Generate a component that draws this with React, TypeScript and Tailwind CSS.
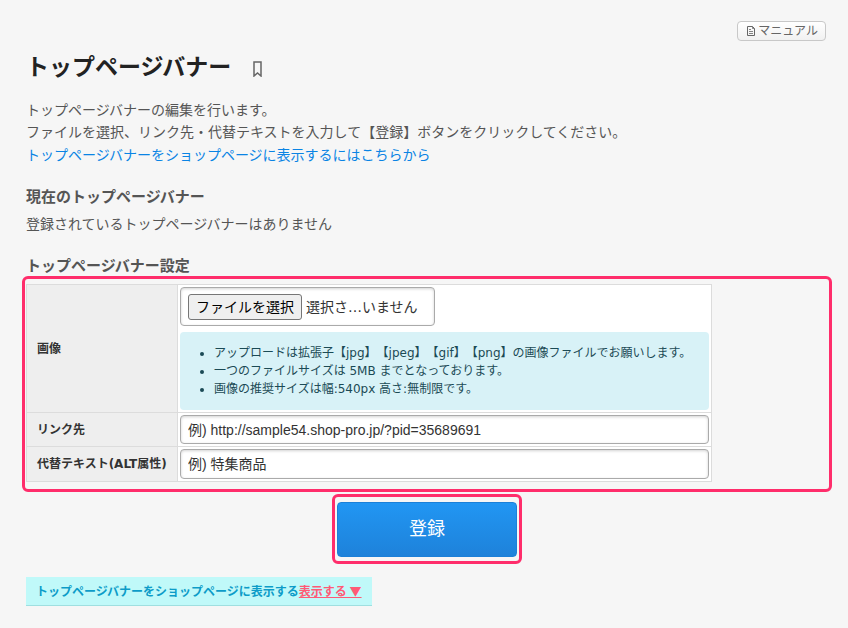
import { useRef } from 'react';

const notes = [
  'アップロードは拡張子【jpg】【jpeg】【gif】【png】の画像ファイルでお願いします。',
  '一つのファイルサイズは 5MB までとなっております。',
  '画像の推奨サイズは幅:540px 高さ:無制限です。',
];

const thClass =
  'border border-[#dcdcdc] bg-[#eeeeee] pl-[10px] text-left align-middle text-xs font-bold text-[#333333]';
const tdClass = 'border border-[#dcdcdc] bg-white p-[2px]';
const inputClass =
  'block w-full rounded border border-[#aaaaaa] bg-white px-[7px] font-["Liberation_Sans","Noto_Sans_CJK_JP",sans-serif] text-sm text-[#333333] shadow-[inset_0_1px_3px_rgba(0,0,0,0.18)] placeholder:text-[#333333]';

function ManualLink() {
  return (
    <a
      href="#manual"
      className="flex h-5 items-center gap-[3px] rounded border border-[#c8c8c8] bg-linear-to-b from-white to-[#f1f1f1] px-[7px] pl-[9px] text-xs text-[#666666]"
    >
      <svg width="8" height="10" viewBox="0 0 8 10" fill="none" stroke="#666666">
        <path d="M.5.5h5l2 2v7h-7z" />
        <path d="M5.5.5v2h2M2 3.5h2M2 5.5h4M2 7.5h4" strokeWidth="0.800" />
      </svg>
      マニュアル
    </a>
  );
}

function FilePicker() {
  const fileRef = useRef<HTMLInputElement>(null);

  return (
    <div className="flex h-[39px] w-[255px] items-center gap-1 rounded border border-[#aaaaaa] bg-white px-[7px] text-sm shadow-[inset_0_1px_3px_rgba(0,0,0,0.18)]">
      <input ref={fileRef} id="image" type="file" accept=".jpg,.jpeg,.gif,.png" className="hidden" />
      <button
        type="button"
        onClick={() => fileRef.current?.click()}
        className="h-[26px] shrink-0 rounded-[3px] border border-[#767676] bg-[#efefef] px-[7px] leading-6 text-black"
      >
        ファイルを選択
      </button>
      <span className="whitespace-nowrap text-[#333333]">選択さ…いません</span>
    </div>
  );
}

export default function App() {
  return (
    <main className='min-h-screen bg-[#f6f6f6] pt-[21px] pr-4 pb-[22px] pl-[22px] font-["DejaVu_Sans","Noto_Sans_CJK_JP",sans-serif] text-sm leading-[22px] text-[#555555] [text-spacing-trim:space-all]'>
      <div className="flex justify-end pr-[6px]">
        <ManualLink />
      </div>

      {/* Title and description */}
      <header className="px-1">
        <div className="mt-[10px] flex items-center gap-[22px]">
          <h1 className="text-[23px] leading-8 font-bold text-[#222222]">トップページバナー</h1>
          <button type="button" aria-label="ブックマーク" className="pt-1">
            <svg width="9" height="16" viewBox="0 0 9 16" fill="none" stroke="#666666" strokeWidth="1.500">
              <path d="M1 1h7v14l-3.500-3L1 15z" />
            </svg>
          </button>
        </div>
        <p className="mt-4">
          トップページバナーの編集を行います。
          <br />
          ファイルを選択、リンク先・代替テキストを入力して【登録】ボタンをクリックしてください。
        </p>
        <a href="#display" className="mt-px block text-[#0a84e4]">
          トップページバナーをショップページに表示するにはこちらから
        </a>
      </header>

      <section className="mt-5 px-1">
        <h2 className="text-[15px] font-bold">現在のトップページバナー</h2>
        <p className="mt-[5px]">登録されているトップページバナーはありません</p>
      </section>

      {/* Settings form */}
      <form className="mt-[21px] flex flex-col" onSubmit={(e) => e.preventDefault()}>
        <h2 className="px-1 text-[15px] leading-5 font-bold">トップページバナー設定</h2>
        <div className="rounded-md border-3 border-[#ff2d6b] px-px pt-[5px] pb-[7px]">
          <table className="w-full max-w-[686px] table-fixed border-collapse">
            <tbody>
              <tr>
                <th scope="row" className={`${thClass} w-[151px]`}>
                  <label htmlFor="image">画像</label>
                </th>
                <td className={tdClass}>
                  <FilePicker />
                  <ul className="mt-[6px] list-disc rounded bg-[#d8f2f7] py-3 pl-[34px] text-xs leading-[18px] text-[#1b4a55]">
                    {notes.map((note) => (
                      <li key={note}>{note}</li>
                    ))}
                  </ul>
                </td>
              </tr>
              <tr>
                <th scope="row" className={thClass}>
                  <label htmlFor="link">リンク先</label>
                </th>
                <td className={tdClass}>
                  <input
                    id="link"
                    type="text"
                    placeholder="例) http://sample54.shop-pro.jp/?pid=35689691"
                    className={`${inputClass} h-[29px]`}
                  />
                </td>
              </tr>
              <tr>
                <th scope="row" className={thClass}>
                  <label htmlFor="alt">代替テキスト(ALT属性)</label>
                </th>
                <td className={tdClass}>
                  <input
                    id="alt"
                    type="text"
                    placeholder="例) 特集商品"
                    className={`${inputClass} h-[30px]`}
                  />
                </td>
              </tr>
            </tbody>
          </table>
        </div>

        <div className="mt-[2px] self-center rounded-md border-3 border-[#ff2d6b] px-[2px] pt-[5px] pb-1">
          <button
            type="submit"
            className="block h-[55px] w-[180px] rounded border border-[#1b80d8] bg-linear-to-b from-[#2196f3] to-[#1e82da] pb-[2px] text-lg text-white"
          >
            登録
          </button>
        </div>
      </form>

      <div className='mt-[13px] ml-1 flex h-[29px] w-fit items-center border-b border-[#9fdfe0] bg-[#c0f9f9] px-[10px] font-["Noto_Sans_CJK_JP",sans-serif] text-xs font-bold text-[#0d9cc8]'>
        トップページバナーをショップページに表示する
        <a href="#open" className="text-[#ff5a76] underline">
          表示する ▼
        </a>
      </div>
    </main>
  );
}
